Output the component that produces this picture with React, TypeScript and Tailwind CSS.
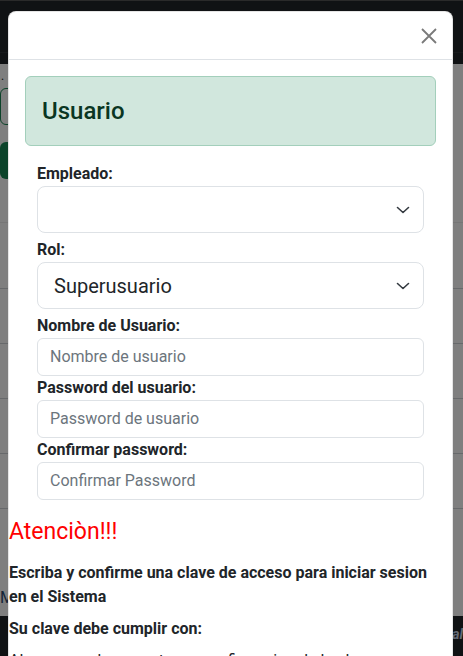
import React from 'react';

const Chevron: React.FC = () => (
    <svg className="w-[16px] h-[12px] shrink-0" viewBox="0 0 16 12" fill="none">
        <path d="M2.5 3.5l5.5 5 5.5-5" stroke="#343a40" strokeWidth="1.6" strokeLinecap="round" strokeLinejoin="round" />
    </svg>
);

const SelectBox: React.FC<{ value?: string }> = ({ value }) => (
    <div className="h-[47px] border border-[#dee2e6] rounded-lg flex items-center justify-between pl-4 pr-3 text-[20px] text-[#212529]">
        <span>{value}</span>
        <Chevron />
    </div>
);

const TextBox: React.FC<{ placeholder: string }> = ({ placeholder }) => (
    <div className="h-[38px] border border-[#dee2e6] rounded-md flex items-center px-3 text-[16px] text-[#6c757d]">
        {placeholder}
    </div>
);

const Label: React.FC<{ children: React.ReactNode }> = ({ children }) => (
    <div className="font-bold text-[16px] leading-6 text-[#212529]">{children}</div>
);

const App: React.FC = () => {
    return (
        <div className="relative w-full h-[656px] overflow-hidden bg-white" style={{ fontFamily: 'Roboto, "Noto Sans", sans-serif' }}>
            {/* page behind the modal */}
            <div className="h-16 bg-[#212529] border-t border-[#555] flex flex-col">
                <div className="mt-[51px] border-t border-[#2f3337]" />
            </div>
            <div className="flex flex-col">
                <div className="h-[24px] text-[12px] leading-[24px] pl-[1px] text-[#212529]">.</div>
                <div className="h-[37px] w-[300px] border border-[#198754] rounded-md" />
                <div className="mt-[17px] h-[37px] w-[120px] bg-[#198754] rounded-md" />
                <div className="h-[44px] border-b border-[#ededed]" />
                <div className="h-[66px] border-b border-[#cfd3d7]" />
                <div className="h-[55px] border-b border-[#cfd3d7]" />
                <div className="h-[55px] border-b border-[#cfd3d7]" />
                <div className="h-[55px] border-b border-[#cfd3d7]" />
                <div className="h-[55px] border-b border-[#cfd3d7]" />
                <div className="h-[107px] flex items-end pb-[6px] text-[16px] leading-6 text-[#2c4a6e]">Mostrando</div>
                <div className="h-[60px] bg-[#212529] flex justify-end pt-[8px]">
                    <span className="italic font-bold text-[14px] text-[#c9d4e6]">Portal</span>
                </div>
            </div>

            {/* backdrop */}
            <div className="absolute inset-0 bg-black/50" />

            {/* modal */}
            <div className="absolute left-[8px] top-[11px] w-[445px] bg-white rounded-lg border border-black/10">
                <div className="h-[48px] border-b border-[#dee2e6] flex items-center justify-end pr-[15px]">
                    <svg width="16" height="16" viewBox="0 0 16 16">
                        <path d="M1 1l14 14M15 1L1 15" stroke="#7a7a7a" strokeWidth="1.8" />
                    </svg>
                </div>
                <div className="pt-4">
                    <div className="mx-4 mb-4 h-[70px] bg-[#d1e7dd] border border-[#a3cfbb] rounded-md flex items-center px-4">
                        <h4 className="text-[24px] leading-[1.2] text-[#0a3622] font-medium">Usuario</h4>
                    </div>
                    <div className="px-7">
                        <Label>Empleado:</Label>
                        <SelectBox />
                        <div className="mt-[5px]"><Label>Rol:</Label></div>
                        <SelectBox value="Superusuario" />
                        <div className="mt-[5px]"><Label>Nombre de Usuario:</Label></div>
                        <TextBox placeholder="Nombre de usuario" />
                        <Label>Password del usuario:</Label>
                        <TextBox placeholder="Password de usuario" />
                        <Label>Confirmar password:</Label>
                        <TextBox placeholder="Confirmar Password" />
                    </div>
                    <div className="mt-[18px] pr-[14px]">
                        <h4 className="text-[23px] leading-[1.25] text-[#ff0000] mb-[14px]">Atenciòn!!!</h4>
                        <p className="font-bold text-[16px] leading-6 text-[#212529] mb-2">
                            Escriba y confirme una clave de acceso para iniciar sesion en el Sistema
                        </p>
                        <p className="font-bold text-[16px] leading-6 text-[#212529] mb-2">Su clave debe cumplir con:</p>
                        <p className="text-[16px] leading-6 text-[#212529]">
                            Al menos ocho caracteres, confirmacion de la clave, mayusculas y minusculas
                        </p>
                    </div>
                </div>
            </div>
        </div>
    );
};

export default App;
